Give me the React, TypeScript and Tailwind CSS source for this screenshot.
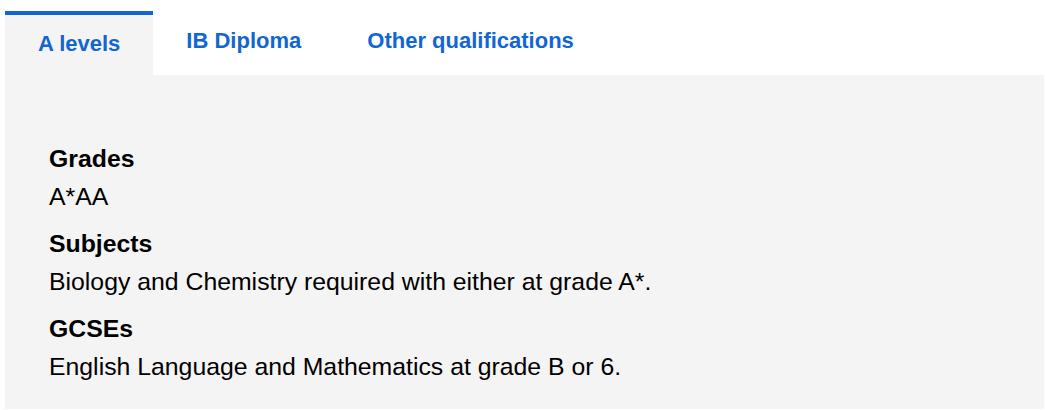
import { useState } from "react";

const tabs = ["A levels", "IB Diploma", "Other qualifications"];

const entries = [
  { title: "Grades", text: "A*AA" },
  {
    title: "Subjects",
    text: "Biology and Chemistry required with either at grade A*.",
  },
  { title: "GCSEs", text: "English Language and Mathematics at grade B or 6." },
];

export default function App() {
  const [active, setActive] = useState(0);

  return (
    <div
      className="min-h-screen bg-white pl-[5px] pr-[1px] pb-[1px] text-black"
      style={{ fontFamily: '"Liberation Sans", Arial, sans-serif' }}
    >
      <div className="flex h-[75px] items-start">
        {tabs.map((tab, i) =>
          i === active ? (
            <button
              key={tab}
              onClick={() => setActive(i)}
              className="mt-[11px] h-[64px] border-t-4 border-[#1166d2] bg-[#f4f4f4] px-[33px] pt-[17px] text-[22px] font-bold leading-[24px] text-[#1166d2] self-start flex items-start"
            >
              {tab}
            </button>
          ) : (
            <button
              key={tab}
              onClick={() => setActive(i)}
              className="mt-[29px] px-[33px] text-[22px] font-bold leading-[24px] text-[#1166d2]"
            >
              {tab}
            </button>
          )
        )}
      </div>

      <div className="bg-[#f4f4f4] pl-[44px] pt-[65px] pb-[23px]">
        <dl className="flex flex-col gap-[9px]">
          {entries.map((entry) => (
            <div key={entry.title}>
              <dt className="text-[24.8px] font-bold leading-[38px]">
                {entry.title}
              </dt>
              <dd className="text-[24.8px] leading-[38px]">{entry.text}</dd>
            </div>
          ))}
        </dl>
      </div>
    </div>
  );
}
